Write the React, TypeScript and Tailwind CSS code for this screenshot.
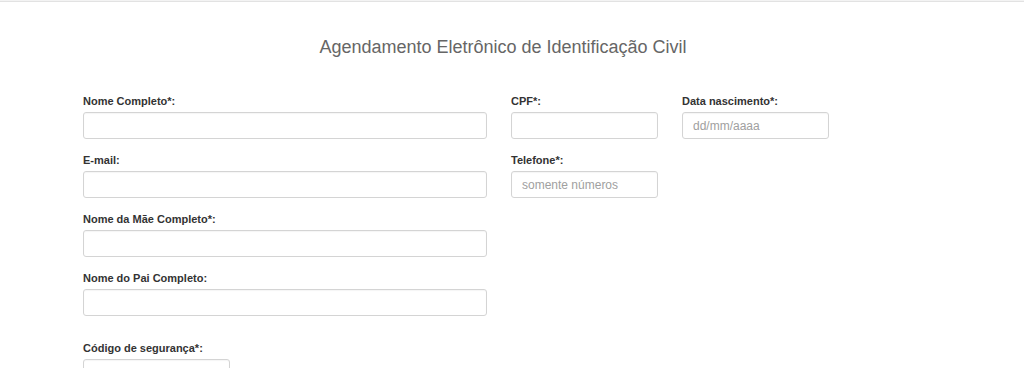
const font = { fontFamily: '"Liberation Sans", Arial, Helvetica, sans-serif' };

type Field = { label: string; width: string; placeholder?: string };

function FormField({ label, width, placeholder }: Field) {
  return (
    <div className="flex flex-col">
      <label className="mb-[3px] h-[15px] text-[11px] leading-[15px] font-bold text-[#333]">{label}</label>
      <input
        type="text"
        placeholder={placeholder}
        className={`${width} h-[27px] rounded-[3px] border border-[#d4d4d4] bg-white px-[10px] text-[12px] text-[#555] shadow-[inset_0_1px_1px_rgba(0,0,0,0.04)] outline-none placeholder:text-[#a0a0a0]`}
      />
    </div>
  );
}

export default function App() {
  return (
    <div className="h-[368px] w-full overflow-hidden bg-white" style={font}>
      {/* top rule */}
      <div className="h-[1px] bg-[#f3f3f3]" />
      <div className="h-[1px] bg-[#e2e2e2]" />

      <div className="pl-[83px]">
        <h1 className="mt-[35px] w-[840px] text-center text-[18px] leading-[20px] font-normal text-[#666]">
          Agendamento Eletrônico de Identificação Civil
        </h1>

        <div className="mt-[37px] flex flex-col gap-[14px]">
          <div className="flex gap-[24px]">
            <FormField label="Nome Completo*:" width="w-[404px]" />
            <FormField label="CPF*:" width="w-[147px]" />
            <FormField label="Data nascimento*:" width="w-[147px]" placeholder="dd/mm/aaaa" />
          </div>
          <div className="flex gap-[24px]">
            <FormField label="E-mail:" width="w-[404px]" />
            <FormField label="Telefone*:" width="w-[147px]" placeholder="somente números" />
          </div>
          <FormField label="Nome da Mãe Completo*:" width="w-[404px]" />
          <FormField label="Nome do Pai Completo:" width="w-[404px]" />
          <div className="mt-[11px]">
            <FormField label="Código de segurança*:" width="w-[147px]" />
          </div>
        </div>
      </div>
    </div>
  );
}
